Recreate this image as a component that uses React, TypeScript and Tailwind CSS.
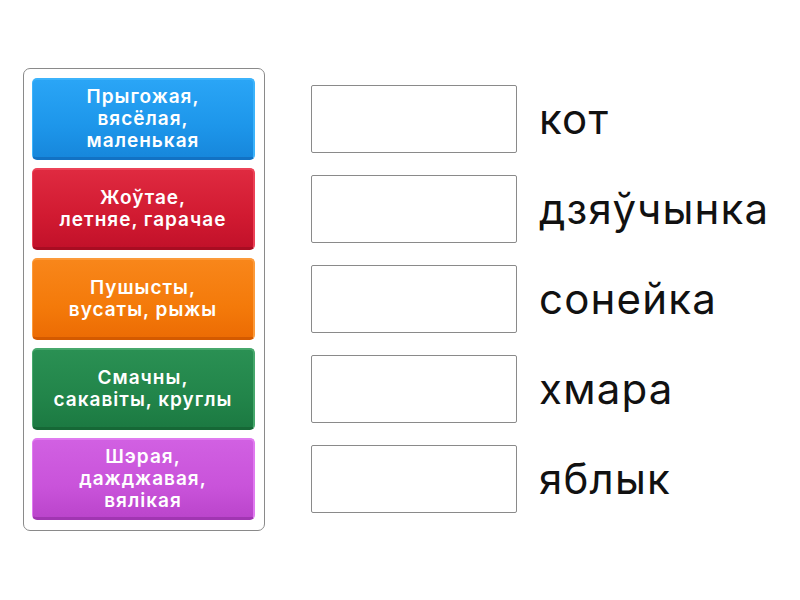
import React from "react";

const tiles = [
  { lines: ["Прыгожая,", "вясёлая,", "маленькая"], cls: "bg-[linear-gradient(180deg,#2aa5f6_0%,#1d96ea_60%,#1787dc_100%)] border-[#3cb3fb] border-b-[#1272c4]" },
  { lines: ["Жоўтае,", "летняе, гарачае"], cls: "bg-[linear-gradient(180deg,#df2a40_0%,#d11a31_60%,#c2112a_100%)] border-[#ec4257] border-b-[#a80d22]" },
  { lines: ["Пушысты,", "вусаты, рыжы"], cls: "bg-[linear-gradient(180deg,#f8861a_0%,#f47a0a_60%,#ec6c04_100%)] border-[#fc9a3a] border-b-[#d45a00]" },
  { lines: ["Смачны,", "сакавіты, круглы"], cls: "bg-[linear-gradient(180deg,#2a9053_0%,#22854a_60%,#1c7a42_100%)] border-[#47a86c] border-b-[#166836]" },
  { lines: ["Шэрая,", "дажджавая,", "вялікая"], cls: "bg-[linear-gradient(180deg,#d160e2_0%,#c953da_60%,#bb45cc_100%)] border-[#e07af0] border-b-[#a136b2]" },
];

const words = ["кот", "дзяўчынка", "сонейка", "хмара", "яблык"];

export default function App() {
  return (
    <div className="w-[800px] h-[600px] bg-white font-['Inter',sans-serif] flex pt-[68px] pl-[23px]">
      <div className="w-[242px] h-[463px] border border-[#8a8a8a] rounded-[7px] pl-[8px] pr-[9px] pt-[9px] flex flex-col gap-[8px]">
        {tiles.map((t, i) => (
          <div
            key={i}
            className={`h-[82px] w-[223px] rounded-[5px] border-t-2 border-r-2 border-l border-b-[3px] flex flex-col items-center justify-center text-white font-semibold text-[19px] leading-[22px] tracking-[1px] text-center ${t.cls}`}
          >
            {t.lines.map((l, j) => (
              <div key={j}>{l}</div>
            ))}
          </div>
        ))}
      </div>
      <div className="ml-[46px] pt-[17px] flex flex-col gap-[22px]">
        {words.map((w, i) => (
          <div key={i} className="flex items-center h-[68px]">
            <div className="w-[206px] h-[68px] border border-[#8a8a8a] rounded-[2px] bg-white" />
            <div className="ml-[22px] text-[42px] text-[#111] leading-none tracking-[1.2px]">{w}</div>
          </div>
        ))}
      </div>
    </div>
  );
}
